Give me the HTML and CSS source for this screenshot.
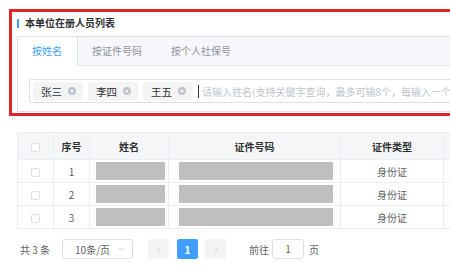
FILE: index.html
```html
<!DOCTYPE html>
<html lang="zh-CN">
<head>
  <meta charset="UTF-8" />
  <title>本单位在册人员列表</title>
  <link rel="stylesheet" href="styles.css">
</head>
<body>
  <div class="page">

    <!-- Search area (marked in red) -->
    <div class="mark">
      <h3 class="title">本单位在册人员列表</h3>
      <div class="tabs">
        <div class="tab-head">
          <div class="tab active">按姓名</div>
          <div class="tab">按证件号码</div>
          <div class="tab">按个人社保号</div>
        </div>
        <div class="tab-body">
          <div class="tag-input">
            <span class="tag">张三<svg class="close" viewBox="0 0 8 8"><circle cx="4" cy="4" r="4"/><path d="M2.6 2.6L5.4 5.4M5.4 2.6L2.6 5.4"/></svg></span>
            <span class="tag">李四<svg class="close" viewBox="0 0 8 8"><circle cx="4" cy="4" r="4"/><path d="M2.6 2.6L5.4 5.4M5.4 2.6L2.6 5.4"/></svg></span>
            <span class="tag">王五<svg class="close" viewBox="0 0 8 8"><circle cx="4" cy="4" r="4"/><path d="M2.6 2.6L5.4 5.4M5.4 2.6L2.6 5.4"/></svg></span>
            <span class="caret"></span>
            <span class="placeholder">请输入姓名(支持关键字查询，最多可输8个，每输入一个后按回车确认)</span>
          </div>
        </div>
      </div>
    </div>

    <!-- Result table -->
    <table class="grid">
      <thead>
        <tr>
          <th class="col-check"><span class="checkbox"></span></th>
          <th class="col-no">序号</th>
          <th class="col-name">姓名</th>
          <th class="col-id">证件号码</th>
          <th class="col-type">证件类型</th>
          <th class="col-more"></th>
        </tr>
      </thead>
      <tbody>
        <tr>
          <td><span class="checkbox"></span></td>
          <td>1</td>
          <td><div class="mask mask-name"></div></td>
          <td><div class="mask mask-id"></div></td>
          <td>身份证</td>
          <td></td>
        </tr>
        <tr>
          <td><span class="checkbox"></span></td>
          <td>2</td>
          <td><div class="mask mask-name"></div></td>
          <td><div class="mask mask-id"></div></td>
          <td>身份证</td>
          <td></td>
        </tr>
        <tr>
          <td><span class="checkbox"></span></td>
          <td>3</td>
          <td><div class="mask mask-name"></div></td>
          <td><div class="mask mask-id"></div></td>
          <td>身份证</td>
          <td></td>
        </tr>
      </tbody>
    </table>

    <!-- Pagination -->
    <div class="pager">
      <span class="total">共 3 条</span>
      <div class="size-select">
        <span>10条/页</span>
        <svg class="arrow" viewBox="0 0 8 5"><path d="M1 1L4 4L7 1"/></svg>
      </div>
      <button class="btn-nav"><svg viewBox="0 0 5 8"><path d="M4 1L1 4L4 7"/></svg></button>
      <button class="btn-page">1</button>
      <button class="btn-nav"><svg viewBox="0 0 5 8"><path d="M1 1L4 4L1 7"/></svg></button>
      <span class="jump">前往</span>
      <div class="jump-input">1</div>
      <span class="jump-unit">页</span>
    </div>

  </div>
</body>
</html>
```

FILE: styles.css
```css
* {
  margin: 0;
  padding: 0;
  box-sizing: border-box;
}

body {
  font-family: "Noto Sans CJK SC", "Noto Sans", sans-serif;
  background-color: #ffffff;
  color: #606266;
  overflow: hidden;
}

.page {
  width: 620px;
}

/* Red marked search block */
.mark {
  margin: 9px 0 0 9px;
  border: 3px solid #e0252d;
  padding: 5px 0 1px 5px;
}

.title {
  font-size: 10px;
  line-height: 12px;
  font-weight: bold;
  color: #303133;
  display: flex;
  align-items: center;
  margin-bottom: 7px;
}

.title::before {
  content: "";
  width: 2px;
  height: 9px;
  background-color: #409eff;
  margin-right: 6px;
}

/* Tabs card */
.tabs {
  border: 1px solid #dcdfe6;
  border-right: none;
  background: white;
}

.tab-head {
  display: flex;
  background-color: #f5f7fa;
  border-bottom: 1px solid #e4e7ed;
  height: 29px;
}

.tab {
  font-size: 10px;
  line-height: 28px;
  padding: 0 15px 0 14px;
  color: #909399;
}

.tab.active {
  background: white;
  color: #409eff;
  border-right: 1px solid #dcdfe6;
  height: 29px;
}

.tab-body {
  padding: 13px 0 8px 11px;
}

.tag-input {
  display: flex;
  align-items: center;
  height: 24px;
  border: 1px solid #dcdfe6;
  border-right: none;
  border-radius: 3px 0 0 3px;
  padding-left: 3px;
  white-space: nowrap;
  overflow: hidden;
}

.tag {
  display: flex;
  align-items: center;
  height: 19px;
  background-color: #f4f4f5;
  border-radius: 3px;
  padding: 0 7px 0 8px;
  margin-right: 5px;
  font-size: 10.5px;
  color: #303133;
}

.close {
  width: 8px;
  height: 8px;
  margin-left: 6px;
}

.close circle {
  fill: #c0c4cc;
}

.close path {
  stroke: white;
  stroke-width: 1;
}

.caret {
  width: 1px;
  height: 13px;
  background-color: #303133;
  margin-right: 3px;
}

.placeholder {
  font-size: 10px;
  color: #c0c4cc;
}

/* Table */
.grid {
  margin: 16px 0 0 17px;
  border-collapse: collapse;
  table-layout: fixed;
  font-size: 10px;
}

.grid th,
.grid td {
  border: 1px solid #ebeef5;
  text-align: center;
  padding: 0;
}

.grid th {
  height: 27px;
  background-color: #f5f6f8;
  color: #303133;
  font-weight: bold;
}

.grid td {
  height: 23px;
  color: #606266;
}

.col-check { width: 36px; }
.col-no { width: 36px; }
.col-name { width: 79px; }
.col-id { width: 172px; }
.col-type { width: 103px; }
.col-more { width: 120px; }

.checkbox {
  display: inline-block;
  width: 9px;
  height: 9px;
  border: 1px solid #dcdfe6;
  border-radius: 2px;
  background: white;
  vertical-align: middle;
}

.mask {
  height: 18px;
  background-color: #bfbfbf;
}

.mask-name {
  width: 69px;
  margin-left: 6px;
}

.mask-id {
  width: 154px;
  margin-left: 10px;
}

/* Pagination */
.pager {
  display: flex;
  align-items: center;
  margin: 10px 0 0 20px;
  font-size: 10px;
  color: #606266;
}

.total {
  margin-right: 12px;
}

.size-select {
  display: flex;
  align-items: center;
  justify-content: space-between;
  width: 71px;
  height: 20px;
  border: 1px solid #dcdfe6;
  border-radius: 3px;
  padding: 0 8px 0 12px;
  margin-right: 15px;
}

.arrow {
  width: 6px;
  height: 4px;
}

.arrow path,
.btn-nav path {
  fill: none;
  stroke: #c0c4cc;
  stroke-width: 1;
}

button {
  border: none;
  font-family: inherit;
  height: 20px;
  width: 21px;
  border-radius: 2px;
  display: flex;
  align-items: center;
  justify-content: center;
}

.btn-nav {
  background-color: #f4f4f5;
}

.btn-nav svg {
  width: 4px;
  height: 7px;
}

.btn-page {
  background-color: #409eff;
  color: white;
  font-weight: bold;
  font-size: 10px;
  margin: 0 7px 0 8px;
}

.jump {
  margin-left: 23px;
  margin-right: 3px;
}

.jump-input {
  width: 32px;
  height: 20px;
  border: 1px solid #dcdfe6;
  border-radius: 3px;
  text-align: center;
  line-height: 18px;
  margin-right: 5px;
}
```
